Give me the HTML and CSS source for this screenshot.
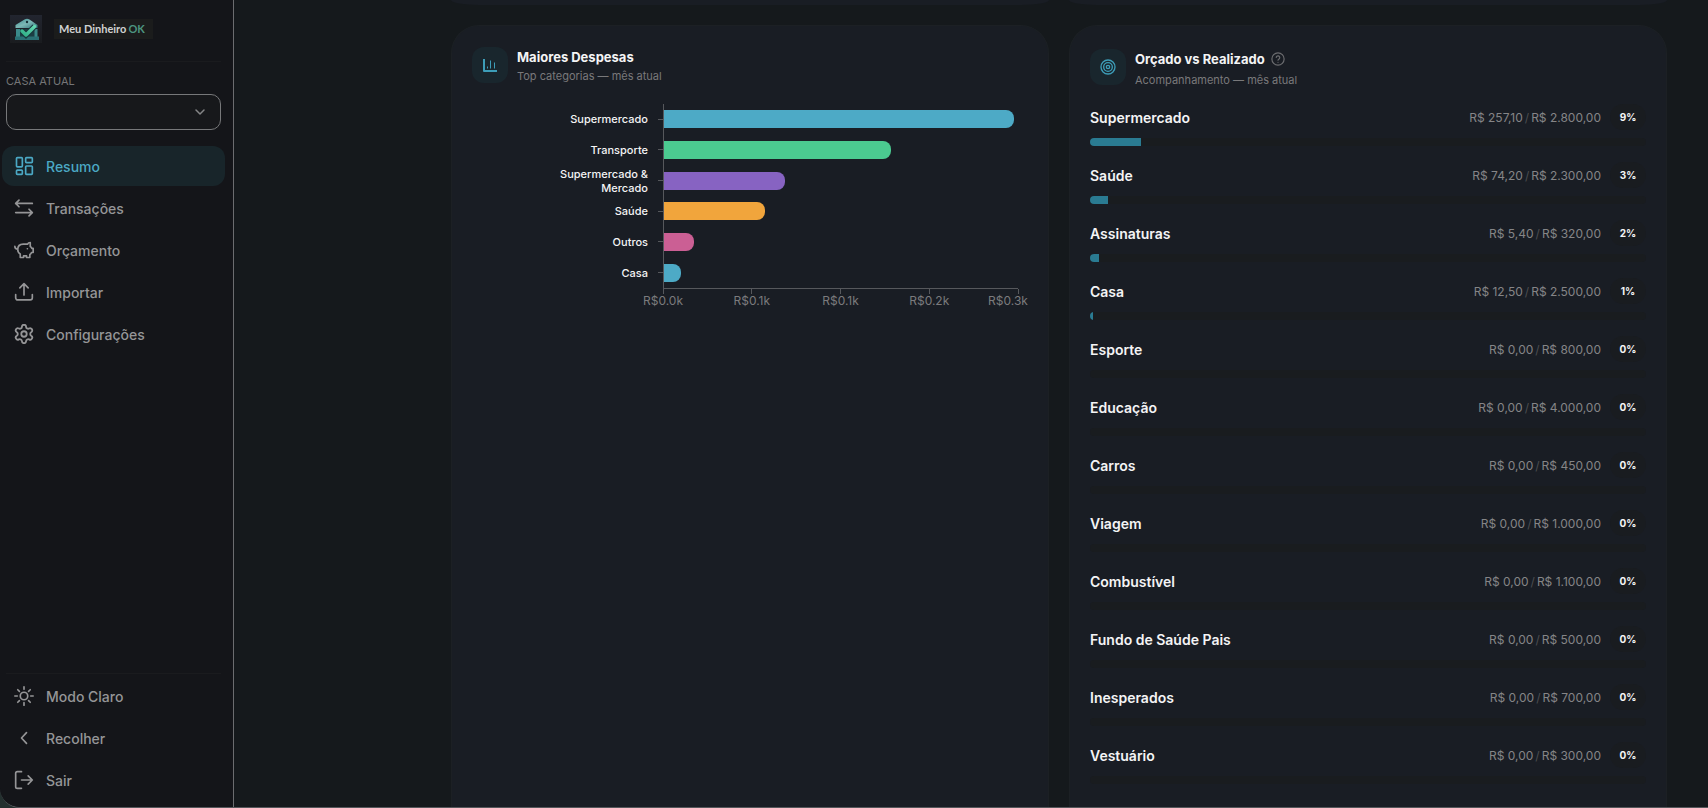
FILE: index.html
```html
<!DOCTYPE html>
<html lang="pt-BR">
<head>
<meta charset="utf-8">
<meta name="viewport" content="width=device-width, initial-scale=1">
<title>Meu Dinheiro OK</title>
<link rel="stylesheet" href="styles.css">
</head>
<body>
<div class="app">
  <aside class="sidebar">
    <div class="brand">
      <svg class="brand-mark" viewBox="0 0 32 28" aria-hidden="true">
        <defs>
          <linearGradient id="roof" x1="0" y1="0" x2="1" y2="1"><stop offset="0" stop-color="#3f8f92"/><stop offset=".5" stop-color="#7db8b6"/><stop offset="1" stop-color="#2d7377"/></linearGradient>
          <linearGradient id="check" x1="0" y1="1" x2="1" y2="0"><stop offset="0" stop-color="#2fae86"/><stop offset="1" stop-color="#63d8b0"/></linearGradient>
          <linearGradient id="tile" x1="0" y1="0" x2="0" y2="1"><stop offset="0" stop-color="#22252f"/><stop offset="1" stop-color="#1a1c1f"/></linearGradient>
        </defs>
        <rect width="32" height="28" fill="url(#tile)"/>
        <path d="M5.500 13V10L14.500 4.500Q17 3.200 19.500 4.500L27.500 10V13Z" fill="url(#roof)"/>
        <path d="M7 14h20v8H7z" fill="#1b3d43"/>
        <path d="M6 14h4v8H6zM24.500 14h3v8h-3z" fill="#3a8a8a"/>
        <path d="M5 21.500h24V25H5z" fill="#2a7074"/>
        <circle cx="17" cy="7" r="1.200" fill="#163238"/>
        <path d="M12 16l4 4 8.500-8.500" fill="none" stroke="#17363b" stroke-width="5.500"/>
        <path d="M12 16l4 4 8.500-8.500" fill="none" stroke="url(#check)" stroke-width="3.500" stroke-linejoin="round" stroke-linecap="round"/>
      </svg>
      <span class="brand-name">Meu Dinheiro<span class="brand-ok">OK</span></span>
    </div>
    <div class="house">
      <label class="house-label" for="house">CASA ATUAL</label>
      <div class="select-wrap">
        <select id="house" class="house-select"><option></option></select>
        <svg class="icon chevron" viewBox="0 0 24 24" aria-hidden="true"><path d="M4 8l8 8 8-8"/></svg>
      </div>
    </div>
    <nav class="nav">
      <a class="nav-item active" href="#resumo"><svg class="icon" viewBox="0 0 24 24" aria-hidden="true"><rect x="3" y="2" width="7" height="11" rx="1"/><rect x="14" y="2" width="8" height="6" rx="1"/><rect x="14" y="12" width="8" height="10" rx="1"/><rect x="3" y="17" width="7" height="5" rx="1"/></svg>Resumo</a>
      <a class="nav-item" href="#transacoes"><svg class="icon" viewBox="0 0 24 24" aria-hidden="true"><path d="M6 2.500L2 6.500l4 4M2 6.500h20M18 13.500l4 4-4 4M22 17.500H2"/></svg>Transações</a>
      <a class="nav-item" href="#orcamento"><svg class="icon" viewBox="0 0 24 24" aria-hidden="true"><path d="M19.500 3c-1.500 0-2.800 1-3.200 2H11c-4 0-6.500 2.500-6.500 6.500 0 2.300 1 4.200 3 5.300V21h4v-2h3.500v2h4v-3.500c1-.6 1.600-1.400 2-2.500h2v-5h-1.700c-.3-.9-.8-1.600-1.800-2.200zM4.500 11C2.500 11 1 9.500 1 7.500M16 10.500h.1"/></svg>Orçamento</a>
      <a class="nav-item" href="#importar"><svg class="icon" viewBox="0 0 24 24" aria-hidden="true"><path d="M12 15.500V2M7 7l5-5 5 5M2 15v4a2.500 2.500 0 0 0 2.500 2.500h15A2.500 2.500 0 0 0 22 19v-4"/></svg>Importar</a>
      <a class="nav-item" href="#configuracoes"><svg class="icon" viewBox="1 1 22 22" aria-hidden="true"><path d="M9.700 4.100a2.300 2.300 0 0 1 4.600 0 2.300 2.300 0 0 0 3.300 1.900 2.300 2.300 0 0 1 2.300 4 2.300 2.300 0 0 0 0 3.900 2.300 2.300 0 0 1-2.300 4 2.300 2.300 0 0 0-3.300 1.900 2.300 2.300 0 0 1-4.600 0 2.300 2.300 0 0 0-3.300-1.900 2.300 2.300 0 0 1-2.300-4 2.300 2.300 0 0 0 0-3.900 2.300 2.300 0 0 1 2.300-4 2.300 2.300 0 0 0 3.300-1.900"/><circle cx="12" cy="12" r="3"/></svg>Configurações</a>
    </nav>
    <div class="nav nav-bottom">
      <button class="nav-item" type="button"><svg class="icon" viewBox="0 0 24 24" aria-hidden="true"><circle cx="12" cy="12" r="4.500"/><path d="M12 1v3M12 20v3M1 12h3M20 12h3M4.500 4.500l2 2M17.500 17.500l2 2M4.500 19.500l2-2M17.500 6.500l2-2"/></svg>Modo Claro</button>
      <button class="nav-item" type="button"><svg class="icon" viewBox="0 0 24 24" aria-hidden="true"><path d="M15 5.500L9 12l6 6.500"/></svg>Recolher</button>
      <button class="nav-item" type="button"><svg class="icon" viewBox="0 0 24 24" aria-hidden="true"><path d="M9 22H4a2 2 0 0 1-2-2V4a2 2 0 0 1 2-2h5M17 17l5-5-5-5M22 12H9"/></svg>Sair</button>
    </div>
  </aside>

  <main class="main">
    <div class="cards">
      <div class="card card-end"></div>
      <div class="card card-end"></div>

      <section class="card">
        <header class="card-head">
          <span class="card-icon"><svg class="icon icon-chart" viewBox="0 0 16 16" aria-hidden="true"><path d="M2 2v12h13"/><path class="thin" d="M5.500 11.500v-2M8.500 11.500v-8M12.500 11.500v-6"/></svg></span>
          <div class="card-titles">
            <h2 class="card-title">Maiores Despesas</h2>
            <p class="card-sub">Top categorias — mês atual</p>
          </div>
        </header>
        <div class="chart">
          <div class="chart-row"><span class="chart-label">Supermercado</span><div class="chart-track"><div class="chart-bar blue" style="width:98.900%"></div></div></div>
          <div class="chart-row"><span class="chart-label">Transporte</span><div class="chart-track"><div class="chart-bar green" style="width:64.100%"></div></div></div>
          <div class="chart-row"><span class="chart-label">Supermercado &amp; Mercado</span><div class="chart-track"><div class="chart-bar purple" style="width:34.200%"></div></div></div>
          <div class="chart-row"><span class="chart-label">Saúde</span><div class="chart-track"><div class="chart-bar orange" style="width:28.500%"></div></div></div>
          <div class="chart-row"><span class="chart-label">Outros</span><div class="chart-track"><div class="chart-bar pink" style="width:8.500%"></div></div></div>
          <div class="chart-row"><span class="chart-label">Casa</span><div class="chart-track"><div class="chart-bar blue" style="width:4.800%"></div></div></div>
        </div>
        <div class="chart-axis">
          <div class="tick"><span>R$0.0k</span></div><div class="tick"><span>R$0.1k</span></div><div class="tick"><span>R$0.1k</span></div><div class="tick"><span>R$0.2k</span></div><div class="tick"><span class="last">R$0.3k</span></div>
        </div>
      </section>

      <section class="card">
        <header class="card-head card-head-tall">
          <span class="card-icon"><svg class="icon" viewBox="0 0 24 24" aria-hidden="true"><circle cx="12" cy="12" r="10.500"/><circle cx="12" cy="12" r="6.500"/><circle cx="12" cy="12" r="2.500"/></svg></span>
          <div class="card-titles">
            <h2 class="card-title">Orçado vs Realizado <button class="help" type="button" aria-label="Ajuda"><svg class="icon" viewBox="0 0 24 24" aria-hidden="true"><circle cx="12" cy="12" r="10.500"/><path d="M9 9.200a3 3 0 0 1 6 .8c0 2-3 2.500-3 4M12 17.500h.1"/></svg></button></h2>
            <p class="card-sub">Acompanhamento — mês atual</p>
          </div>
        </header>
        <ul class="budget">
          <li class="item"><div class="line"><span class="name">Supermercado</span><span class="amount">R$ 257,10<i>/</i>R$ 2.800,00</span><b class="pct">9%</b></div><div class="track"><div class="fill" style="width:9.200%"></div></div></li>
          <li class="item"><div class="line"><span class="name">Saúde</span><span class="amount">R$ 74,20<i>/</i>R$ 2.300,00</span><b class="pct">3%</b></div><div class="track"><div class="fill" style="width:3.200%"></div></div></li>
          <li class="item"><div class="line"><span class="name">Assinaturas</span><span class="amount">R$ 5,40<i>/</i>R$ 320,00</span><b class="pct">2%</b></div><div class="track"><div class="fill" style="width:1.700%"></div></div></li>
          <li class="item"><div class="line"><span class="name">Casa</span><span class="amount">R$ 12,50<i>/</i>R$ 2.500,00</span><b class="pct">1%</b></div><div class="track"><div class="fill" style="width:0.500%"></div></div></li>
          <li class="item"><div class="line"><span class="name">Esporte</span><span class="amount">R$ 0,00<i>/</i>R$ 800,00</span><b class="pct">0%</b></div><div class="track"></div></li>
          <li class="item"><div class="line"><span class="name">Educação</span><span class="amount">R$ 0,00<i>/</i>R$ 4.000,00</span><b class="pct">0%</b></div><div class="track"></div></li>
          <li class="item"><div class="line"><span class="name">Carros</span><span class="amount">R$ 0,00<i>/</i>R$ 450,00</span><b class="pct">0%</b></div><div class="track"></div></li>
          <li class="item"><div class="line"><span class="name">Viagem</span><span class="amount">R$ 0,00<i>/</i>R$ 1.000,00</span><b class="pct">0%</b></div><div class="track"></div></li>
          <li class="item"><div class="line"><span class="name">Combustível</span><span class="amount">R$ 0,00<i>/</i>R$ 1.100,00</span><b class="pct">0%</b></div><div class="track"></div></li>
          <li class="item"><div class="line"><span class="name">Fundo de Saúde Pais</span><span class="amount">R$ 0,00<i>/</i>R$ 500,00</span><b class="pct">0%</b></div><div class="track"></div></li>
          <li class="item"><div class="line"><span class="name">Inesperados</span><span class="amount">R$ 0,00<i>/</i>R$ 700,00</span><b class="pct">0%</b></div><div class="track"></div></li>
          <li class="item"><div class="line"><span class="name">Vestuário</span><span class="amount">R$ 0,00<i>/</i>R$ 300,00</span><b class="pct">0%</b></div><div class="track"></div></li>
        </ul>
      </section>
    </div>
  </main>
</div>
</body>
</html>
```
FILE: styles.css
```css
* { box-sizing: border-box; }
html { background: #24302f; }
body {
  margin: 0;
  color: #f4f4f5;
  font-family: Inter, "Liberation Sans", sans-serif;
  font-size: 12px;
}
h2, p, ul { margin: 0; padding: 0; }
button { font: inherit; background: none; border: 0; padding: 0; }
.icon {
  width: 20px;
  height: 20px;
  flex: none;
  fill: none;
  stroke: currentColor;
  stroke-width: 2;
  stroke-linecap: round;
  stroke-linejoin: round;
}
.app {
  display: flex;
  height: 100vh;
  overflow: hidden;
  background: #15191c;
  border-bottom: 1px solid #55575b;
  border-bottom-left-radius: 20px;
}
.sidebar {
  display: flex;
  flex-direction: column;
  width: 234px;
  flex: none;
  background: #141519;
  border-right: 1px solid #6b6c6f;
}
.brand {
  display: flex;
  align-items: center;
  gap: 12px;
  margin: 0 12px 0 6px;
  padding: 15px 0 18px 4px;
  border-bottom: 1px solid #1a1b1e;
}
.brand-mark { width: 32px; height: 28px; }
.brand-name {
  padding: 2px 8px 2px 5px;
  background: #1b1c1c;
  color: #d0d2d1;
  font-family: Lato, sans-serif;
  font-size: 11px;
  font-weight: 700;
  line-height: 16px;
}
.brand-ok { margin-left: 2px; color: #4c9580; }
.house {
  display: flex;
  flex-direction: column;
  gap: 4px;
  padding: 11px 12px 0 6px;
}
.house-label { color: #757577; font-size: 11px; line-height: 17px; }
.select-wrap { display: grid; align-items: center; }
.house-select {
  grid-area: 1 / 1;
  width: 100%;
  height: 36px;
  appearance: none;
  background: #17181b;
  border: 1px solid #77787a;
  border-radius: 10px;
}
.chevron {
  grid-area: 1 / 1;
  justify-self: end;
  width: 12px;
  height: 12px;
  margin-right: 15px;
  color: #858587;
  stroke-width: 3;
  pointer-events: none;
}
.nav {
  display: flex;
  flex-direction: column;
  gap: 2px;
  padding: 16px 8px 0 2px;
}
.nav-item {
  display: flex;
  align-items: center;
  gap: 12px;
  height: 40px;
  padding: 0 12px;
  border-radius: 12px;
  color: #959597;
  font-size: 14px;
  font-weight: 500;
  text-decoration: none;
}
.active { background: #18252a; color: #4ba9c5; }
.nav-bottom { margin-top: auto; padding-top: 3px; padding-bottom: 7px; }
.nav-bottom::before {
  content: "";
  height: 1px;
  margin: 0 4px;
  background: #1a1b1e;
}
.main { flex: 1; padding: 0 41px 0 217px; }
.cards {
  display: grid;
  grid-template-columns: 1fr 1fr;
  grid-template-rows: 5px 1fr;
  gap: 20px;
  height: 100%;
}
.card {
  min-width: 0;
  padding: 21px 20px;
  background: #191d24;
  border: 1px solid #1c2024;
  border-bottom: 0;
  border-radius: 28px 28px 0 0;
}
.card-end {
  padding: 0;
  border: 0;
  border-radius: 0 0 28px 28px / 0 0 5px 5px;
}
.card-head { display: flex; align-items: center; gap: 9px; height: 36px; }
.card-icon {
  display: grid;
  place-items: center;
  width: 36px;
  height: 36px;
  border-radius: 12px;
  background: #19262d;
  color: #3d9db8;
}
.card-icon .icon { width: 16px; height: 16px; }
.card-icon .icon-chart { stroke-width: 2; stroke-linecap: butt; }
.icon-chart .thin { stroke-width: 1; }
.card-titles { padding-top: 2px; }
.card-title {
  display: flex;
  align-items: center;
  gap: 6px;
  font-size: 13px;
  font-weight: 700;
  line-height: 20px;
}
.card-sub { color: #79797b; font-size: 11px; line-height: 18px; }
.card-head-tall { height: 40px; }
.card-head-tall .card-titles { padding-top: 4px; }
.card-head-tall .card-sub { padding-top: 2px; }
.help { display: flex; color: #6c6d70; }
.help .icon { width: 14px; height: 14px; }
.chart {
  display: grid;
  grid-template-rows: repeat(6, 1fr);
  height: 184px;
  margin: 21px 10px 0 0;
}
.chart-row {
  display: grid;
  grid-template-columns: 176px 1fr;
  gap: 15px;
  align-items: center;
  min-height: 0;
  line-height: 14px;
}
.chart-label {
  justify-self: end;
  max-width: 92px;
  font-size: 11px;
  font-weight: 500;
  text-align: right;
}
.chart-track {
  display: flex;
  align-items: center;
  height: 100%;
  border-left: 1px solid #56585c;
}
.chart-track::before {
  content: "";
  width: 6px;
  height: 1px;
  margin-left: -6px;
  background: #56585c;
}
.chart-bar { height: 18px; border-radius: 0 8px 8px 0; }
.blue { background: #4daac6; }
.green { background: #4bca90; }
.purple { background: #8763c2; }
.orange { background: #f1a53c; }
.pink { background: #cb5f94; }
.chart-axis {
  display: flex;
  justify-content: space-between;
  margin: 0 10px 0 191px;
  border-top: 1px solid #56585c;
  color: #7b7b7d;
}
.tick {
  display: flex;
  flex-direction: column;
  align-items: center;
  width: 0;
  line-height: 14px;
}
.tick::before { content: ""; width: 1px; height: 5px; background: #56585c; }
.last { margin-right: 20px; }
.budget { list-style: none; padding-top: 17px; }
.item { height: 58px; }
.line { display: flex; align-items: center; height: 26px; }
.name { flex: 1; font-size: 14px; font-weight: 600; }
.amount { color: #858587; font-size: 12px; }
.amount i { margin: 0 2px; color: #4c4d50; font-style: normal; }
.pct {
  width: 36px;
  margin-left: 9px;
  border-radius: 13px;
  background: #191c20;
  font-size: 10px;
  line-height: 26px;
  text-align: center;
}
.track {
  height: 8px;
  margin-top: 8px;
  border-radius: 4px;
  background: #191c1f;
  overflow: hidden;
}
.fill { height: 100%; background: #2a7b92; }
```
